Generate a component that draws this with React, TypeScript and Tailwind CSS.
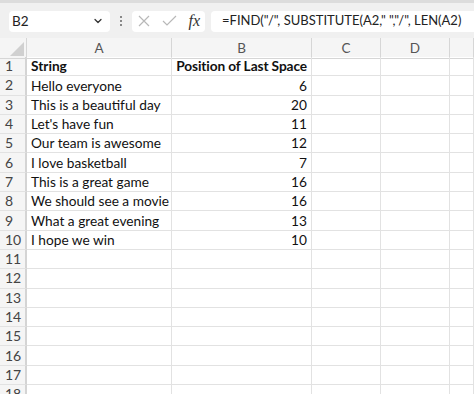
import { ChevronDown } from "lucide-react";

const rows: [string, string][] = [
  ["Hello everyone", "6"],
  ["This is a beautiful day", "20"],
  ["Let's have fun", "11"],
  ["Our team is awesome", "12"],
  ["I love basketball", "7"],
  ["This is a great game", "16"],
  ["We should see a movie", "16"],
  ["What a great evening", "13"],
  ["I hope we win", "10"],
];

const cols = "grid grid-cols-[27px_145px_140px_69px_69px_1fr]";
const cell = "border-r border-b border-[#e2e2e2]";

export default function App() {
  const body: { a: string; b: string; bold?: boolean }[] = [
    { a: "String", b: "Position of Last Space", bold: true },
    ...rows.map(([a, b]) => ({ a, b })),
  ];
  while (body.length < 18) body.push({ a: "", b: "" });

  return (
    <div className="h-[394px] w-[474px] overflow-hidden bg-white font-['Lato',sans-serif]">
      {/* formula bar */}
      <div className="flex h-[38px] items-center gap-[6px] border-t-[3px] border-[#dcdcdc] bg-[#f0f0f0] pl-[9px] pt-[1px]">
        <div className="flex h-[21px] w-[101px] items-center justify-between rounded-[4px] bg-white pl-[3px] pr-[6px] text-[13.5px] text-[#222]">
          B2
          <ChevronDown className="h-3 w-3 text-[#333]" strokeWidth={2.5} />
        </div>
        <div className="flex w-[10px] flex-col items-center gap-[2px]">
          <span className="h-[2px] w-[2px] rounded-full bg-[#666]" />
          <span className="h-[2px] w-[2px] rounded-full bg-[#666]" />
          <span className="h-[2px] w-[2px] rounded-full bg-[#666]" />
        </div>
        <div className="flex h-[21px] w-[73px] items-center justify-between rounded-[4px] bg-white px-[5px]">
          <svg width="14" height="14" viewBox="0 0 14 14" fill="none" stroke="#b8b8b8" strokeWidth="1.2">
            <path d="M2 2 L12 12 M12 2 L2 12" />
          </svg>
          <svg width="15" height="12" viewBox="0 0 15 12" fill="none" stroke="#b8b8b8" strokeWidth="1.2">
            <path d="M1 6 L5 10 L14 1" />
          </svg>
          <span className="font-['Liberation_Serif',serif] text-[16px] italic leading-none text-[#333]">fx</span>
        </div>
        <div className="flex h-[21px] flex-1 items-center whitespace-nowrap rounded-l-[4px] bg-white pl-[11px] text-[13px] text-[#222]">
          =FIND("/", SUBSTITUTE(A2," ","/", LEN(A2)
        </div>
      </div>

      {/* column headers */}
      <div className={`${cols} h-[19px] bg-[#f5f5f5] text-[13.5px] text-[#555]`}>
        <div className="relative border-r border-b border-[#d6d6d6]">
          <svg className="absolute bottom-[2px] right-[2px]" width="14" height="14" viewBox="0 0 14 14">
            <path d="M14 0 L14 14 L0 14 Z" fill="#d0d0d0" />
          </svg>
        </div>
        {["A", "B", "C", "D", ""].map((c, i) => (
          <div key={i} className="flex items-center justify-center border-r border-b border-[#d6d6d6]">
            {c}
          </div>
        ))}
      </div>

      {/* rows */}
      {body.map((r, i) => (
        <div key={i} className={`${cols} h-[19.3px] text-[13.7px] leading-none text-[#111]`}>
          <div className="flex items-center border-r-2 border-b border-r-[#d4d4d4] border-b-[#e2e2e2] bg-[#f5f5f5] pl-[5px] text-[14px] text-[#444]">
            {i + 1}
          </div>
          <div className={`${cell} flex items-center pl-[4px] ${r.bold ? "font-bold" : ""}`}>{r.a}</div>
          <div className={`${cell} flex items-center justify-end pr-[4px] ${r.bold ? "font-bold tracking-[-0.1px]" : ""}`}>{r.b}</div>
          <div className={cell} />
          <div className={cell} />
          <div className={cell} />
        </div>
      ))}
    </div>
  );
}
